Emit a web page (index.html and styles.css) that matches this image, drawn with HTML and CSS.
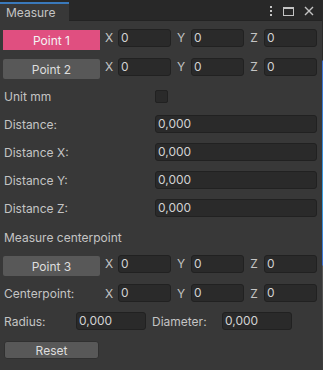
FILE: index.html
```html
<!DOCTYPE html>
<html lang="en">
<head>
    <meta charset="UTF-8">
    <meta name="viewport" content="width=device-width, initial-scale=1.0">
    <title>Measure</title>
    <link rel="stylesheet" href="styles.css">
</head>
<body>
    <div id="window">
        <div id="titlebar">
            <div class="tab">Measure</div>
            <div class="winicons">
                <svg width="4" height="10" viewBox="0 0 4 10"><rect x="1" y="0" width="2" height="2" fill="#c4c4c4"/><rect x="1" y="4" width="2" height="2" fill="#c4c4c4"/><rect x="1" y="8" width="2" height="2" fill="#c4c4c4"/></svg>
                <svg width="11" height="9" viewBox="0 0 11 9"><rect x="0.5" y="0.5" width="10" height="8" fill="none" stroke="#c4c4c4"/><rect x="0" y="0" width="11" height="2" fill="#c4c4c4"/></svg>
                <svg width="10" height="10" viewBox="0 0 10 10"><path d="M1 1L9 9M9 1L1 9" stroke="#c4c4c4" stroke-width="1.4"/></svg>
            </div>
        </div>
        <div id="content">
            <div class="row pointrow">
                <button class="bots pink">Point 1</button>
                <span class="axis">X</span><div class="field small">0</div>
                <span class="axis">Y</span><div class="field small">0</div>
                <span class="axis">Z</span><div class="field small">0</div>
            </div>
            <div class="row pointrow m7">
                <button class="bots">Point 2</button>
                <span class="axis">X</span><div class="field small">0</div>
                <span class="axis">Y</span><div class="field small">0</div>
                <span class="axis">Z</span><div class="field small">0</div>
            </div>
            <div class="row checkrow">
                <span class="lbl">Unit mm</span>
                <div class="check"></div>
            </div>
            <div class="row fieldrow m12">
                <span class="lbl">Distance:</span>
                <div class="field wide">0,000</div>
            </div>
            <div class="row fieldrow m10">
                <span class="lbl">Distance X:</span>
                <div class="field wide">0,000</div>
            </div>
            <div class="row fieldrow m10">
                <span class="lbl">Distance Y:</span>
                <div class="field wide">0,000</div>
            </div>
            <div class="row fieldrow m10">
                <span class="lbl">Distance Z:</span>
                <div class="field wide">0,000</div>
            </div>
            <div class="row fieldrow m11">
                <span class="lbl">Measure centerpoint</span>
            </div>
            <div class="row pointrow m9">
                <button class="bots">Point 3</button>
                <span class="axis">X</span><div class="field small">0</div>
                <span class="axis">Y</span><div class="field small">0</div>
                <span class="axis">Z</span><div class="field small">0</div>
            </div>
            <div class="row fieldrow m7">
                <span class="lbl first">Centerpoint:</span>
                <span class="axis">X</span><div class="field small">0</div>
                <span class="axis">Y</span><div class="field small">0</div>
                <span class="axis">Z</span><div class="field small">0</div>
            </div>
            <div class="row fieldrow m10">
                <span class="lbl short">Radius:</span>
                <div class="field mid">0,000</div>
                <span class="lbl dia">Diameter:</span>
                <div class="field mid">0,000</div>
            </div>
            <div class="row m11">
                <button class="bots reset">Reset</button>
            </div>
        </div>
    </div>
    <div id="edge"></div>
</body>
</html>
```

FILE: styles.css
```css
html,body{
    margin: 0;
    height: 100%;
}
body{
    display: flex;
    background-color: #383838;
    font-family: Inter, "Noto Sans", sans-serif;
    font-size: 12px;
    color: #c4c4c4;
}
#window{
    width: 322px;
    height: 370px;
    display: flex;
    flex-direction: column;
}
#edge{
    width: 1px;
    height: 370px;
    background: linear-gradient(#2a2a2a 0, #2a2a2a 60px, #3b6fd0 61px, #3aa0e0 200px, #3b6fd0 265px, #5a5a5a 266px, #3a3a3a 100%);
}
#titlebar{
    height: 21px;
    background-color: #282828;
    display: flex;
    align-items: flex-end;
    border-bottom: 1px solid #232323;
    box-sizing: border-box;
}
.tab{
    width: 69px;
    height: 19px;
    box-sizing: border-box;
    border-top: 2px solid #3a79bb;
    background-color: #383838;
    padding-left: 6px;
    line-height: 17px;
    color: #c4c4c4;
    margin-bottom: -1px;
}
.winicons{
    margin-left: auto;
    align-self: center;
    display: flex;
    align-items: center;
    gap: 10px;
    padding-right: 8px;
    margin-top: 2px;
}
#content{
    padding: 8px 0 0 3px;
    display: flex;
    flex-direction: column;
}
.row{
    display: flex;
    align-items: center;
}
.pointrow{
    height: 22px;
    align-items: flex-start;
}
.pointrow .axis{
    line-height: 18px;
}
.fieldrow{
    height: 18px;
}
.checkrow{
    height: 14px;
    margin-top: 9px;
}
.m7{ margin-top: 7px; }
.m9{ margin-top: 9px; }
.m10{ margin-top: 10px; }
.m11{ margin-top: 11px; }
.m12{ margin-top: 12px; }
.bots{
    width: 97px;
    height: 20px;
    margin-top: 1px;
    border: none;
    border-radius: 2px;
    background-color: #585858;
    color: #dedede;
    font-family: inherit;
    font-size: 12px;
    padding: 0;
}
.pink{
    background-color: #e04f80;
    color: #f4f4f4;
    border-radius: 0;
}
.reset{
    width: 95px;
    height: 18px;
    margin: 0 0 0 1px;
    border-radius: 3px;
    border: 1px solid #303030;
}
.axis{
    width: 18px;
    text-align: center;
    color: #c4c4c4;
}
.axis ~ .axis{
    width: 20px;
}
.field{
    height: 18px;
    box-sizing: border-box;
    background-color: #2a2a2a;
    border: 1px solid #212121;
    border-radius: 3px;
    padding-left: 2px;
    line-height: 16px;
    color: #d2d2d2;
}
.small{
    width: 53px;
}
.wide{
    width: 162px;
}
.mid{
    width: 70px;
}
.lbl{
    padding-left: 1px;
    width: 151px;
}
.lbl.first{
    width: 96px;
}
.lbl.short{
    width: 72px;
}
.lbl.dia{
    width: 70px;
    padding-left: 6px;
}
.check{
    width: 13px;
    height: 13px;
    box-sizing: border-box;
    background-color: #2a2a2a;
    border: 1px solid #212121;
    border-radius: 2px;
    margin-top: 1px;
}
```
